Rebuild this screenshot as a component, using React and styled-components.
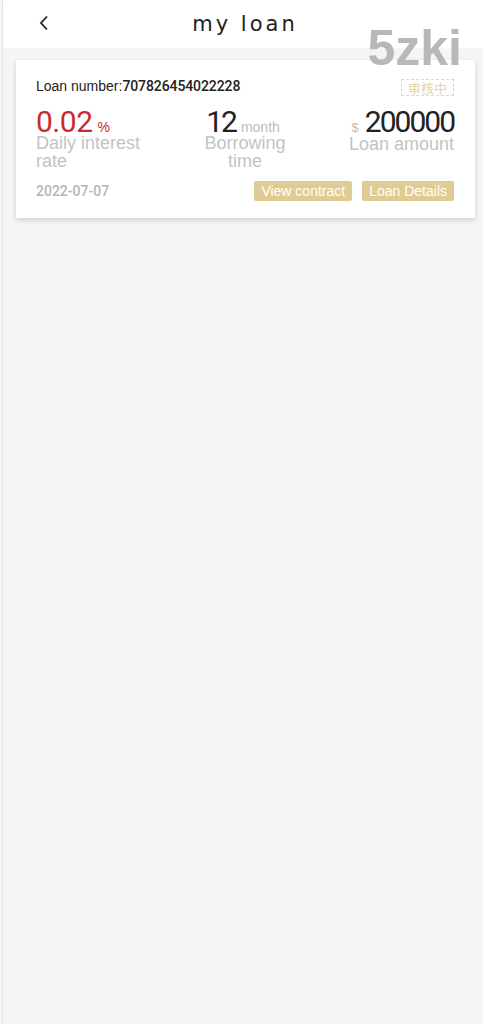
import React from "react";
import styled, { createGlobalStyle } from "styled-components";

const Global = createGlobalStyle`
  html, body { margin: 0; padding: 0; background: #f5f5f5; }
  body { font-family: "Liberation Sans", Arial, sans-serif; }
`;

const Page = styled.div`
  position: relative;
  min-height: 1024px;
  background: #f5f5f5;
  border-left: 1px solid #e4e4e4;
  margin-left: 2px;
  box-sizing: border-box;
`;

const Header = styled.header`
  height: 48px;
  background: #fff;
  display: flex;
  align-items: center;
  justify-content: center;
  position: relative;
`;

const Back = styled.button`
  position: absolute;
  left: 31px;
  top: 12px;
  border: 0;
  background: none;
  padding: 0;
  width: 20px;
  height: 22px;
  display: flex;
  align-items: center;
  justify-content: center;
`;

const Title = styled.h1`
  margin: 0 0 1px 4px;
  font-family: "DejaVu Sans", sans-serif;
  font-weight: 400;
  font-size: 21px;
  letter-spacing: 3px;
  color: #222;
`;

const Watermark = styled.div`
  position: absolute;
  top: 23px;
  right: 21px;
  font-family: "Liberation Sans", Arial, sans-serif;
  font-weight: 700;
  font-size: 50px;
  line-height: 1;
  color: #b8b8b8;
  pointer-events: none;
`;

const SiteMark = styled.div`
  position: absolute;
  top: -2px;
  left: -2px;
  font-family: "DejaVu Sans Mono", monospace;
  font-size: 10px;
  line-height: 12px;
  color: #c8c8c8;
  pointer-events: none;
`;

const List = styled.main`
  padding: 12px 8px 0 13px;
`;

const Card = styled.section`
  background: #fff;
  box-shadow: 0 2px 5px rgba(0, 0, 0, 0.16);
  padding: 14px 21px 17px 20px;
`;

const TopRow = styled.div`
  display: flex;
  justify-content: space-between;
  align-items: center;
  height: 24px;
`;

const LoanNo = styled.div`
  font-size: 14px;
  color: #222;
  b {
    font-family: Roboto, sans-serif;
    font-weight: 500;
    font-size: 14px;
    letter-spacing: -0.1px;
  }
`;

const Badge = styled.span`
  border: 1px dashed #e8dab0;
  color: #e4d4a2;
  font-family: "Noto Sans CJK SC", sans-serif;
  font-size: 13px;
  line-height: 15px;
  padding: 0 6px;
  margin-top: 2px;
`;

const Stats = styled.div`
  display: flex;
  justify-content: space-between;
  margin-top: 16px;
`;

const Stat = styled.div`
  width: 118px;
  text-align: ${(p) => p.$align};
  display: flex;
  flex-direction: column;
  align-items: ${(p) =>
    p.$align === "left" ? "flex-start" : p.$align === "right" ? "flex-end" : "center"};
`;

const Value = styled.div`
  font-family: Roboto, sans-serif;
  font-size: 30px;
  line-height: 16px;
  letter-spacing: ${(p) => p.$ls || "-2px"};
  color: ${(p) => (p.$red ? "#cc2a2f" : "#222")};
  white-space: nowrap;
`;

const Unit = styled.span`
  font-family: "Liberation Sans", Arial, sans-serif;
  font-size: ${(p) => (p.$small ? "13px" : "14px")};
  letter-spacing: 0;
  color: ${(p) => p.$color || "#bdbdbd"};
  margin: 0 ${(p) => (p.$small ? "6px" : "4px")} 0 ${(p) => (p.$small ? "0" : "5px")};
`;

const Label = styled.div`
  font-size: 18px;
  line-height: 17.5px;
  color: #c3c3c3;
  ${(p) => (p.$nowrap ? "white-space: nowrap;" : "")}
`;

const Bottom = styled.div`
  display: flex;
  justify-content: space-between;
  align-items: center;
  margin-top: 11px;
`;

const DateText = styled.span`
  font-family: Roboto, sans-serif;
  font-weight: 500;
  font-size: 14px;
  color: #b5b5b5;
`;

const Buttons = styled.div`
  display: flex;
  gap: 10px;
`;

const Btn = styled.button`
  border: 0;
  background: #e0cc92;
  color: #fff;
  font-family: "Liberation Sans", Arial, sans-serif;
  font-size: 14px;
  line-height: 20px;
  padding: 0 7px;
  border-radius: 2px;
`;

export default function App() {
  return (
    <>
      <Global />
      <Page>
        <SiteMark>re589.com</SiteMark>
        <Header>
          <Back aria-label="back">
            <svg width="10" height="16" viewBox="0 0 10 16">
              <path d="M8 1.5 L2 8 L8 14.5" fill="none" stroke="#222" strokeWidth="1.8" />
            </svg>
          </Back>
          <Title>my loan</Title>
        </Header>
        <Watermark>5zki</Watermark>
        <List>
          <Card>
            <TopRow>
              <LoanNo>
                Loan number:<b>707826454022228</b>
              </LoanNo>
              <Badge>审核中</Badge>
            </TopRow>
            <Stats>
              <Stat $align="left">
                <Value $red $ls="-0.5px">
                  0.02<Unit $color="#cc2a2f">%</Unit>
                </Value>
                <Label>Daily interest rate</Label>
              </Stat>
              <Stat $align="center">
                <Value>
                  12<Unit>month</Unit>
                </Value>
                <Label>Borrowing time</Label>
              </Stat>
              <Stat $align="right">
                <Value>
                  <Unit $small>$</Unit>200000
                </Value>
                <Label $nowrap>Loan amount</Label>
              </Stat>
            </Stats>
            <Bottom>
              <DateText>2022-07-07</DateText>
              <Buttons>
                <Btn>View contract</Btn>
                <Btn>Loan Details</Btn>
              </Buttons>
            </Bottom>
          </Card>
        </List>
      </Page>
    </>
  );
}
